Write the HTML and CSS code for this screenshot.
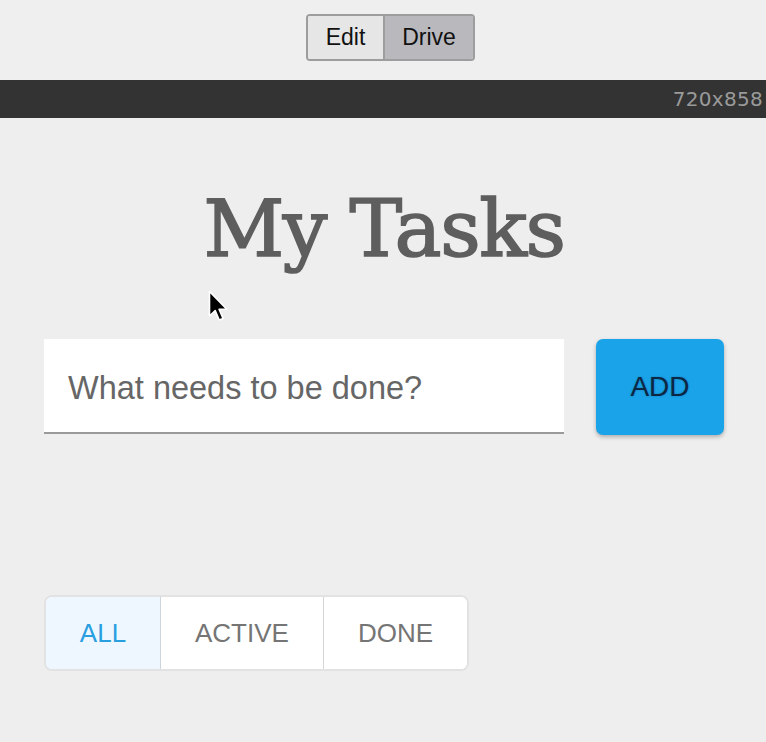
FILE: index.html
```html
<!DOCTYPE html>
<html>
<head>
<meta charset="utf-8">
<link rel="stylesheet" href="styles.css">
</head>
<body>
<div class="toolbar">
  <div class="seg">
    <button class="seg-btn">Edit</button>
    <button class="seg-btn active">Drive</button>
  </div>
</div>
<div class="devbar"><span>720x858</span></div>
<main class="app">
  <h1 class="title">My Tasks</h1>
  <div class="entry">
    <input class="task-input" type="text" placeholder="What needs to be done?">
    <button class="add-btn">ADD</button>
  </div>
  <div class="filters">
    <button class="filter selected">ALL</button>
    <button class="filter">ACTIVE</button>
    <button class="filter">DONE</button>
  </div>
  <svg class="cursor" width="22" height="34" viewBox="0 0 22 34">
    <path d="M1.5 1.5 L1.5 26 L7.2 20.6 L11.2 30 L15 28.4 L11.1 19.2 L18.8 19.2 Z" fill="#000" stroke="#fff" stroke-width="1.6" stroke-linejoin="round"/>
  </svg>
</main>
</body>
</html>
```
FILE: styles.css
```css
html, body {
  margin: 0;
  padding: 0;
  background: #efefef;
}
body {
  font-family: "Liberation Sans", Arial, sans-serif;
  width: 766px;
  height: 742px;
  overflow: hidden;
}
.toolbar {
  height: 80px;
  display: flex;
  justify-content: center;
  align-items: flex-start;
  box-sizing: border-box;
  padding-top: 14px;
  padding-left: 15px;
}
.seg {
  display: flex;
  border: 2px solid #9d9d9d;
  border-radius: 4px;
  overflow: hidden;
  height: 47px;
  box-sizing: border-box;
}
.seg-btn {
  font-family: "Liberation Sans", Arial, sans-serif;
  font-size: 23px;
  color: #111;
  border: none;
  margin: 0;
  padding: 0;
  background: #e6e6e6;
  width: 75px;
}
.seg-btn.active {
  background: #b9b9bd;
  border-left: 2px solid #9d9d9d;
  width: 90px;
}
.devbar {
  height: 38px;
  background: #333333;
  display: flex;
  justify-content: flex-end;
  align-items: center;
  padding-right: 3px;
}
.devbar span {
  font-family: "DejaVu Sans", sans-serif;
  font-size: 20px;
  color: #9a9a9a;
  letter-spacing: 0.3px;
}
.app {
  position: relative;
  background: #eeeeee;
  height: 624px;
  padding: 0 42px 0 44px;
  box-sizing: border-box;
  overflow: hidden;
}
.title {
  margin: 0;
  padding-top: 56px;
  text-align: center;
  font-family: "DejaVu Serif", serif;
  font-weight: normal;
  font-size: 79px;
  line-height: 110px;
  color: #5e5e5e;
  letter-spacing: -1.5px;
  -webkit-text-stroke: 1.6px #5e5e5e;
}
.entry {
  display: flex;
  gap: 32px;
  margin-top: 55px;
}
.task-input {
  width: 520px;
  height: 95px;
  box-sizing: border-box;
  border: none;
  border-bottom: 2px solid #9a9a9a;
  background: #fff;
  padding: 6px 24px 0;
  font-family: "Liberation Sans", Arial, sans-serif;
  font-size: 32.5px;
  color: #333;
  outline: none;
}
.task-input::placeholder {
  color: #666;
}
.add-btn {
  width: 128px;
  height: 96px;
  border: none;
  border-radius: 7px;
  background: #1aa3e8;
  color: #0c2744;
  font-family: "Liberation Sans", Arial, sans-serif;
  font-size: 28px;
  box-shadow: 0 2px 4px rgba(0,0,0,0.28);
  text-shadow: 0 0 2px rgba(10,40,70,0.35);
}
.filters {
  display: inline-flex;
  margin-top: 160px;
  border: 2px solid #e2e2e2;
  border-radius: 8px;
  overflow: hidden;
  background: #fff;
}
.filter {
  height: 72px;
  border: none;
  margin: 0;
  padding: 0 34px;
  background: #fff;
  font-family: "Liberation Sans", Arial, sans-serif;
  font-size: 26px;
  color: #757575;
}
.filter + .filter {
  border-left: 1px solid #d6d6d6;
}
.filter.selected {
  background: #eef7ff;
  color: #2a9fe0;
  width: 114px;
  padding: 0;
}
.filter.selected + .filter {
  border-left-color: #ccd4dc;
}
.cursor {
  position: absolute;
  left: 208px;
  top: 172px;
}
```
